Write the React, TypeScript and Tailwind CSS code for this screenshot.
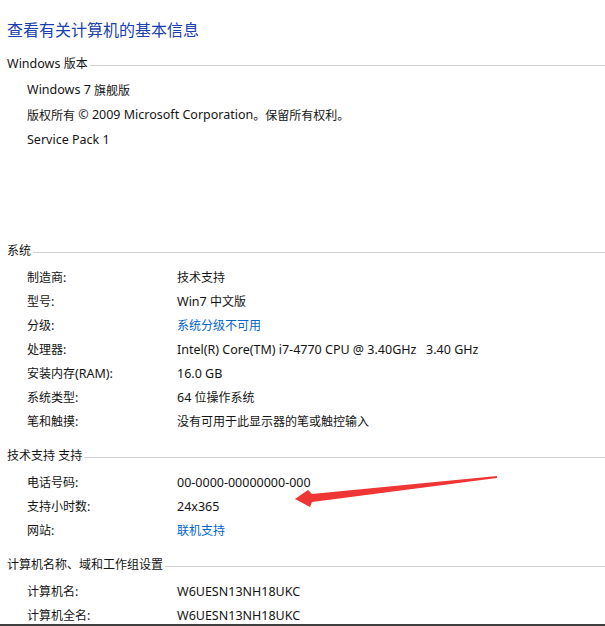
import React from "react";

const font = { fontFamily: '"Noto Sans", "Noto Sans CJK SC", sans-serif' };

function T({ text }: { text: string }) {
  const parts = text.split(/([\u3000-\u303f\u4e00-\u9fff\uff00-\uffef]+)/).filter((p) => p.length > 0);
  return (
    <>
      {parts.map((p, i) =>
        /[\u3000-\u303f\u4e00-\u9fff\uff00-\uffef]/.test(p) ? (
          <span key={i} className="text-[12px]">{p}</span>
        ) : (
          <span key={i} className="text-[12.5px]">{p}</span>
        )
      )}
    </>
  );
}

function Header({ children }: { children: string }) {
  return (
    <div className="flex items-center h-[16px] pl-[7px]">
      <span className="leading-[16px] text-[#141414] whitespace-nowrap"><T text={children} /></span>
      <div className="flex-1 h-px bg-[#d0d0d0] ml-[2px] mt-[5px]" />
    </div>
  );
}

function Row({ label, value, link }: { label: string; value: string; link?: boolean }) {
  return (
    <div className="flex items-center h-[24px]">
      <div className="w-[177px] pl-[27px] text-[#141414] whitespace-nowrap"><T text={label} /></div>
      <div className={`whitespace-pre ${link ? "text-[#0066cc]" : "text-[#141414]"}`}><T text={value} /></div>
    </div>
  );
}

function Line({ text }: { text: string }) {
  return (
    <div className="flex items-center h-[25px] pl-[27px] text-[#141414] whitespace-pre"><T text={text} /></div>
  );
}

export default function App() {
  return (
    <div className="relative w-[605px] h-[626px] overflow-hidden bg-white border-b-2 border-[#3f3f3f]" style={font}>
      <div className="flex flex-col pt-[20px]">
        <div className="pl-[7px] text-[16px] leading-[20px] text-[#1a3fae]">查看有关计算机的基本信息</div>
        <div className="mt-[15px]">
          <Header>Windows 版本</Header>
        </div>
        <div className="mt-[7px] flex flex-col">
          <Line text="Windows 7 旗舰版" />
          <Line text="版权所有 © 2009 Microsoft Corporation。保留所有权利。" />
          <Line text="Service Pack 1" />
        </div>
        <div className="mt-[89px]">
          <Header>系统</Header>
        </div>
        <div className="mt-[6px] flex flex-col">
          <Row label="制造商:" value="技术支持" />
          <Row label="型号:" value="Win7 中文版" />
          <Row label="分级:" value="系统分级不可用" link />
          <Row label="处理器:" value="Intel(R) Core(TM) i7-4770 CPU @ 3.40GHz   3.40 GHz" />
          <Row label="安装内存(RAM):" value="16.0 GB" />
          <Row label="系统类型:" value="64 位操作系统" />
          <Row label="笔和触摸:" value="没有可用于此显示器的笔或触控输入" />
        </div>
        <div className="mt-[15px]">
          <Header>技术支持 支持</Header>
        </div>
        <div className="mt-[6px] flex flex-col">
          <Row label="电话号码:" value="00-0000-00000000-000" />
          <Row label="支持小时数:" value="24x365" />
          <Row label="网站:" value="联机支持" link />
        </div>
        <div className="mt-[15px]">
          <Header>计算机名称、域和工作组设置</Header>
        </div>
        <div className="mt-[6px] flex flex-col">
          <Row label="计算机名:" value="W6UESN13NH18UKC" />
          <Row label="计算机全名:" value="W6UESN13NH18UKC" />
        </div>
      </div>
      <svg className="absolute left-[290px] top-[470px]" width="215" height="40" viewBox="0 0 215 40">
        <polygon points="5,29 18,20 22,24 207,6 207,8 22,32 20,37" fill="#f03535" />
      </svg>
    </div>
  );
}
